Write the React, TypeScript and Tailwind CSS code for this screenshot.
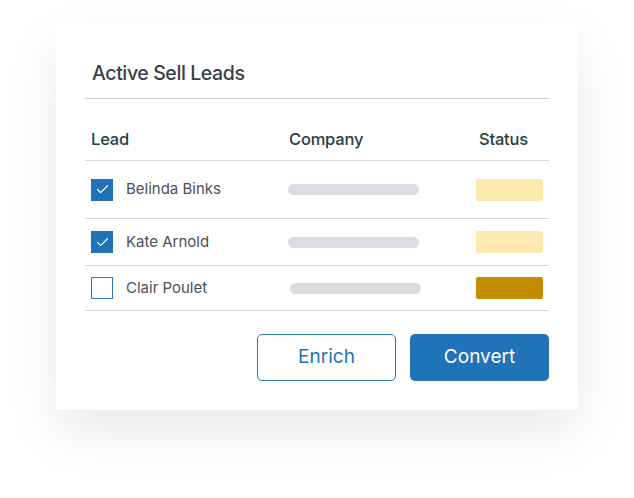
import { Check } from 'lucide-react';

const rows = [
  { name: 'Belinda Binks', checked: true, status: 'bg-[#fbe9ae]', h: 'h-[58px]', bar: 'w-[131px]' },
  { name: 'Kate Arnold', checked: true, status: 'bg-[#fbe9ae]', h: 'h-[47px]', bar: 'w-[131px]' },
  { name: 'Clair Poulet', checked: false, status: 'bg-[#c48c00]', h: 'h-[45px]', bar: 'w-[131px] ml-[2px]' },
];

export default function App() {
  return (
    <div className="w-[634px] h-[498px] bg-white pt-[23px] pl-[56px]" style={{ fontFamily: 'Inter, "Noto Sans", sans-serif' }}>
      <div className="w-[522px] h-[387px] bg-white shadow-[0_22px_50px_rgba(0,0,0,0.09)] px-[29px] pt-[38px] flex flex-col">
        <h1 className="pl-[7px] text-[19.5px] leading-6 text-[#3b4046] font-medium tracking-[-0.4px]">Active Sell Leads</h1>
        <div className="mt-[13px] h-px bg-[#c6cace]" />

        <div className="h-[62px] flex items-center pt-[20px] border-b border-[#d5d8dc] text-[16.5px] font-medium text-[#24403f] tracking-[-0.2px]">
          <div className="pl-[6px] w-[204px]">Lead</div>
          <div className="flex-1">Company</div>
          <div className="w-[70px]">Status</div>
        </div>

        {rows.map((r) => (
          <div key={r.name} className={`${r.h} flex items-center border-b border-[#d5d8dc]`}>
            <div className="pl-[6px] w-[203px] flex items-center gap-[13px]">
              {r.checked ? (
                <div className="w-[22px] h-[22px] bg-[#2173b9] flex items-center justify-center">
                  <Check className="w-[15px] h-[15px] text-white" strokeWidth={1.8} />
                </div>
              ) : (
                <div className="w-[22px] h-[22px] border-[1.5px] border-solid border-[#2a76b9] bg-white" />
              )}
              <span className="text-[15px] text-[#4b5157]">{r.name}</span>
            </div>
            <div className="flex-1">
              <div className={`${r.bar} h-[11px] rounded-full bg-[#d9dce0]`} />
            </div>
            <div className={`w-[67px] h-[22px] rounded-[2px] ${r.status} mr-[6px]`} />
          </div>
        ))}

        <div className="mt-[23px] flex justify-end gap-[14px]">
          <button className="w-[139px] h-[47px] rounded-[5px] border-[1.5px] border-solid border-[#2a76b9] bg-white text-[#2173b9] text-[19px]">Enrich</button>
          <button className="w-[139px] h-[47px] rounded-[5px] bg-[#2173b9] text-white text-[19px]">Convert</button>
        </div>
      </div>
    </div>
  );
}
